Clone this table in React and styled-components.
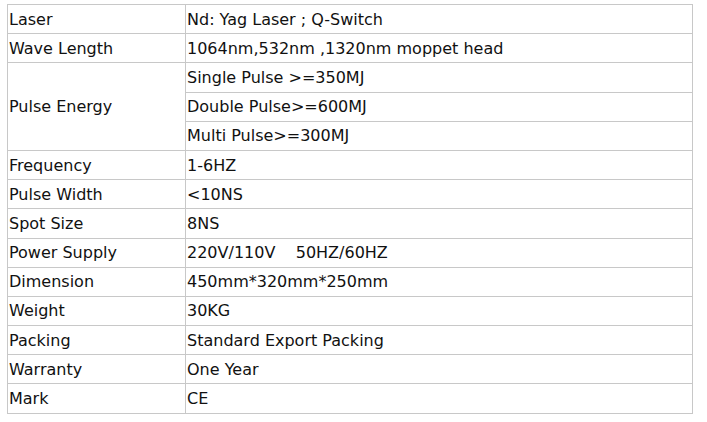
import React from "react";
import styled, { createGlobalStyle } from "styled-components";

const GlobalStyle = createGlobalStyle`
  body {
    margin: 0;
    background: #ffffff;
  }
`;

const Page = styled.div`
  padding: 4px 0 0 7px;
`;

const SpecTable = styled.table`
  border-collapse: collapse;
  width: 686px;
  font-family: "DejaVu Sans", Verdana, sans-serif;
  font-size: 16px;
  color: #111;
`;

const Cell = styled.td`
  border: 1px solid #c8c8c8;
  height: 28.2px;
  padding: 0 0 0 1px;
  vertical-align: middle;
  width: ${(props) => (props.label ? "176px" : "auto")};
  white-space: pre;
`;

const specs = [
  ["Laser", "Nd: Yag Laser ; Q-Switch"],
  ["Wave Length", "1064nm,532nm ,1320nm moppet head"],
  ["Pulse Energy", ["Single Pulse >=350MJ", "Double Pulse>=600MJ", "Multi Pulse>=300MJ"]],
  ["Frequency", "1-6HZ"],
  ["Pulse Width", "<10NS"],
  ["Spot Size", "8NS"],
  ["Power Supply", "220V/110V    50HZ/60HZ"],
  ["Dimension", "450mm*320mm*250mm"],
  ["Weight", "30KG"],
  ["Packing", "Standard Export Packing"],
  ["Warranty", "One Year"],
  ["Mark", "CE"],
];

export default function App() {
  return (
    <>
      <GlobalStyle />
      <Page>
        <SpecTable>
          <tbody>
            {specs.map(([label, value]) =>
              Array.isArray(value) ? (
                value.map((v, i) => (
                  <tr key={label + i}>
                    {i === 0 && (
                      <Cell label rowSpan={value.length}>
                        {label}
                      </Cell>
                    )}
                    <Cell>{v}</Cell>
                  </tr>
                ))
              ) : (
                <tr key={label}>
                  <Cell label>{label}</Cell>
                  <Cell>{value}</Cell>
                </tr>
              )
            )}
          </tbody>
        </SpecTable>
      </Page>
    </>
  );
}
